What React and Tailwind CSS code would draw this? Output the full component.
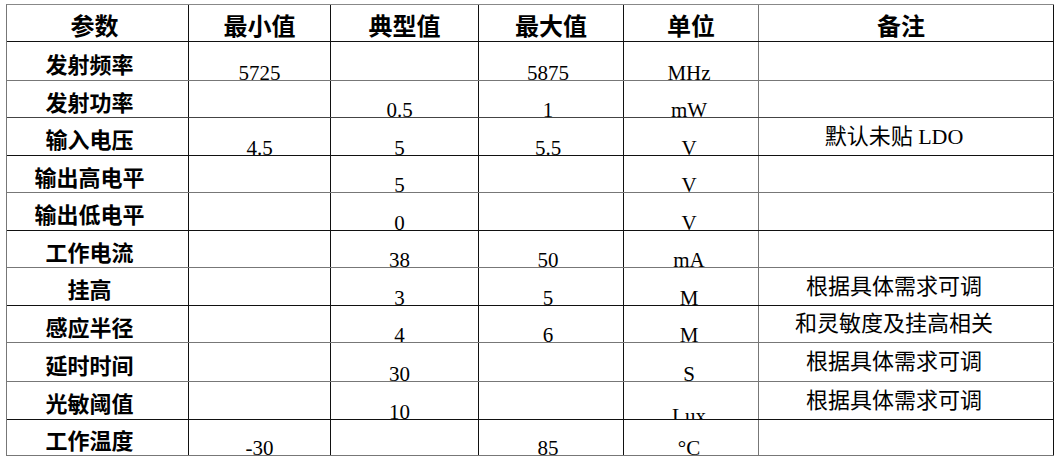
const cols = ['border-r-[#111]', 'border-r-[#111]', 'border-r-[#111]', 'border-r-[#111]', 'border-r-[#777]', 'border-r-[#111]']

const header = ['参数', '最小值', '典型值', '最大值', '单位', '备注']

// [label, min, typ, max, unit, note, height, bottom line colour]
const rows = [
  ['发射频率', '5725', '', '5875', 'MHz', '', 'h-[39px]', 'border-b-[#777]'],
  ['发射功率', '', '0.5', '1', 'mW', '', 'h-[37px]', 'border-b-[#444]'],
  ['输入电压', '4.5', '5', '5.5', 'V', '默认未贴 LDO', 'h-[38px]', 'border-b-[#111]'],
  ['输出高电平', '', '5', '', 'V', '', 'h-[37px]', 'border-b-[#777]'],
  ['输出低电平', '', '0', '', 'V', '', 'h-[38px]', 'border-b-[#111]'],
  ['工作电流', '', '38', '50', 'mA', '', 'h-[37px]', 'border-b-[#777]'],
  ['挂高', '', '3', '5', 'M', '根据具体需求可调', 'h-[38px]', 'border-b-[#111]'],
  ['感应半径', '', '4', '6', 'M', '和灵敏度及挂高相关', 'h-[37px]', 'border-b-[#777]'],
  ['延时时间', '', '30', '', 'S', '根据具体需求可调', 'h-[39px]', 'border-b-[#777]'],
  ['光敏阈值', '', '10', '', 'Lux', '根据具体需求可调', 'h-[38px]', 'border-b-[#111]'],
  ['工作温度', '-30', '', '85', '°C', '', 'h-[36px]', 'border-b-[#777]'],
]

const cjkBold = "font-['Noto_Sans_CJK_SC',sans-serif] font-bold"
const serif = "font-['Liberation_Serif','Noto_Sans_CJK_SC',serif]"

const Row = ({ children, height, line }) => (
  <div className={`grid grid-cols-[182px_142px_148px_145px_135px_295px] border-b ${height} ${line}`}>
    {children}
  </div>
)

const App = () => {
  return (
    <div className="w-[1063px] h-[462px] bg-white text-black overflow-hidden">
      <div className="ml-[6px] mt-[4px] w-[1048px] border-l border-t border-l-[#777] border-t-[#888]">
        <Row height="h-[37px]" line="border-b-[#111]">
          {header.map((h, i) => (
            <div
              key={h}
              className={`flex items-center justify-center border-r pt-[4px] text-[24px] leading-none ${cjkBold} ${cols[i]} ${i === 0 ? 'pr-[6px]' : ''} ${i === 5 ? 'pr-[10px]' : ''}`}
            >
              {h}
            </div>
          ))}
        </Row>
        {rows.map((r, ri) => (
          <Row key={ri} height={r[6]} line={r[7]}>
            <div className={`flex items-center justify-center border-r pt-[3px] pr-[16px] text-[22px] leading-none ${cjkBold} ${cols[0]}`}>
              {r[0]}
            </div>
            {[1, 2, 3, 4].map((c) => (
              <div
                key={c}
                className={`flex items-end justify-center overflow-hidden border-r text-[21px] leading-none ${serif} ${cols[c]} ${c === 2 ? 'pr-[10px]' : ''} ${c === 3 ? 'pr-[6px]' : ''} ${c === 4 ? 'pr-[4px]' : ''}`}
              >
                <span className={r[c] === 'Lux' ? '-mb-[8px]' : '-mb-[4px]'}>{r[c]}</span>
              </div>
            ))}
            <div className={`flex items-center justify-center border-r pr-[24px] text-[22px] leading-none ${serif} ${cols[5]}`}>
              {r[5]}
            </div>
          </Row>
        ))}
      </div>
    </div>
  )
}

export default App
